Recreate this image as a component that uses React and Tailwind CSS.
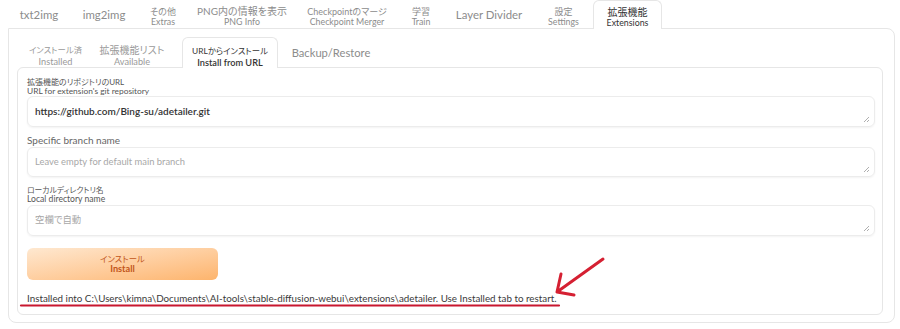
import React from "react";

const JP = "[font-feature-settings:'palt']";

function TopTab({ jp, en, single, selected, w, js = "text-[9px]" }) {
  if (single) {
    return (
      <div className={"shrink-0 flex items-center justify-center text-[11.4px] text-[#8c8c8c] pt-[2px] " + w}>{single}</div>
    );
  }
  return (
    <div
      className={
        "shrink-0 flex flex-col items-center justify-end pb-[1px] " + w + " " +
        (selected
          ? "bg-white border border-b-0 border-[#e6e6e6] rounded-t-md -mb-px relative z-10 text-[#333]"
          : "text-[#8c8c8c]")
      }
    >
      <span className={"leading-[11px] " + js + " " + JP}>{jp}</span>
      <span className="leading-[10px] text-[8.8px]">{en}</span>
    </div>
  );
}

function SubTab({ jp, en, single, selected, w, js = "text-[8.6px]" }) {
  if (single) {
    return (
      <div className={"shrink-0 flex items-center justify-center text-[11.2px] text-[#8c8c8c] pt-[2px] " + w}>{single}</div>
    );
  }
  return (
    <div
      className={
        "shrink-0 flex flex-col items-center justify-end " + w + " " +
        (selected
          ? "bg-white border border-b-0 border-[#e6e6e6] rounded-t-md -mb-px relative z-10 text-[#333]"
          : "text-[#9a9a9a]")
      }
    >
      <span className={"leading-[12px] " + js + " " + JP}>{jp}</span>
      <span className={"leading-[11px] text-[9.2px] " + (selected ? "font-semibold" : "")}>{en}</span>
    </div>
  );
}

function Grip() {
  return (
    <svg className="absolute right-[4px] bottom-[3px]" width="7" height="7" viewBox="0 0 7 7">
      <path d="M6 1 L1 6 M6 4 L4 6" stroke="#9a9a9a" strokeWidth="0.8" />
    </svg>
  );
}

function Field({ children, placeholder, h = "h-[31px]" }) {
  return (
    <div className={"relative shrink-0 rounded-md border border-[#ececec] shadow-[0_1px_2px_rgba(0,0,0,0.05)] flex items-center px-[7px] " + h}>
      {children ? (
        <span className="text-[10px] font-semibold text-[#333]">{children}</span>
      ) : (
        <span className={"text-[9.4px] text-[#a8a8a8] " + JP}>{placeholder}</span>
      )}
      <Grip />
    </div>
  );
}

export default function App() {
  return (
    <div className="w-[900px] h-[329px] bg-white relative overflow-hidden font-[Lato,'Noto_Sans_CJK_JP',sans-serif]">
      <div className="flex h-[28px] pl-2 items-stretch">
        <TopTab single="txt2img" w="w-[62px]" />
        <TopTab single="img2img" w="w-[68px]" />
        <TopTab jp="その他" en="Extras" w="w-[50px]" />
        <TopTab jp="PNG内の情報を表示" en="PNG Info" w="w-[108px]" js="text-[10px]" />
        <TopTab jp="Checkpointのマージ" en="Checkpoint Merger" w="w-[102px]" />
        <TopTab jp="学習" en="Train" w="w-[46px]" />
        <TopTab single="Layer Divider" w="w-[90px]" />
        <TopTab jp="設定" en="Settings" w="w-[59px]" />
        <TopTab jp="拡張機能" en="Extensions" selected w="w-[69px]" js="text-[10px]" />
      </div>

      <div className="ml-2 mr-[5px] h-[295px] border border-[#e6e6e6] rounded-b-lg rounded-tr-lg pl-[8px] pr-[11px] pt-[8px] flex flex-col">
        <div className="flex h-[30px] shrink-0 items-stretch">
          <SubTab jp="インストール済" en="Installed" w="w-[77px]" js="text-[8.4px]" />
          <SubTab jp="拡張機能リスト" en="Available" w="w-[76px]" js="text-[10px]" />
          <div className="w-[12px] shrink-0" />
          <SubTab jp="URLからインストール" en="Install from URL" selected w="w-[96px]" js="text-[8.4px]" />
          <SubTab single="Backup/Restore" w="w-[106px]" />
        </div>

        <div className="h-[248px] shrink-0 border border-[#e6e6e6] rounded-md pl-[9px] pr-[7px] pt-[10px] flex flex-col">
          <div className="flex flex-col shrink-0 leading-[9px] text-[#555]">
            <span className={"text-[8px] " + JP}>拡張機能のリポジトリのURL</span>
            <span className="text-[8.4px]">URL for extension's git repository</span>
          </div>
          <Field>https://github.com/Bing-su/adetailer.git</Field>

          <div className="mt-[7px] shrink-0 text-[10px] text-[#666] leading-[12px]">Specific branch name</div>
          <div className="mt-[1px]">
            <Field placeholder="Leave empty for default main branch" h="h-[30px]" />
          </div>

          <div className="mt-[9px] flex flex-col shrink-0 leading-[9px] text-[#555]">
            <span className={"text-[7.8px] " + JP}>ローカルディレクトリ名</span>
            <span className="text-[8.6px]">Local directory name</span>
          </div>
          <div className="mt-[1px]">
            <Field placeholder="空欄で自動" />
          </div>

          <div className="mt-[12px] shrink-0 w-[191px] h-[32px] rounded-md bg-gradient-to-br from-[#fee8d0] to-[#fdb46c] flex flex-col items-center justify-center leading-[10px]">
            <span className={"text-[8.4px] text-[#c2561a] " + JP}>インストール</span>
            <span className="text-[9.2px] font-bold text-[#c2561a]">Install</span>
          </div>

          <div className="mt-[12px] shrink-0 text-[9.8px] text-[#3a3a3a] leading-[12px] whitespace-nowrap">
            Installed into C:\Users\kimna\Documents\AI-tools\stable-diffusion-webui\extensions\adetailer. Use Installed tab to restart.
          </div>
        </div>
      </div>

      <svg className="absolute left-0 top-0 pointer-events-none" width="900" height="329" viewBox="0 0 900 329">
        <path d="M21 305.5 L559 305.5" stroke="#c8172f" strokeWidth="2.2" strokeLinecap="round" />
        <path d="M603 259 L557 292 M561 274 L557 292 L574 295" stroke="#d52032" strokeWidth="3" fill="none" strokeLinecap="round" strokeLinejoin="round" />
      </svg>
    </div>
  );
}
